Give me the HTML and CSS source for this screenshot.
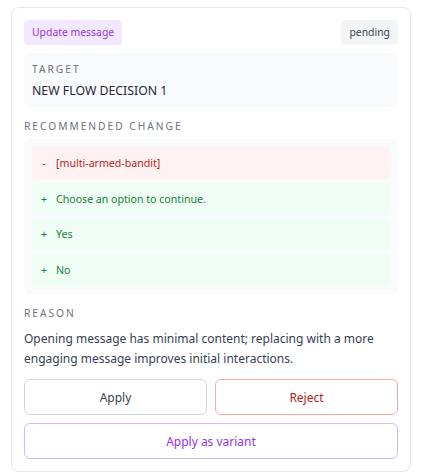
FILE: index.html
```html
<!DOCTYPE html>
<html lang="en">
<head>
    <meta charset="UTF-8">
    <meta name="viewport" content="width=device-width, initial-scale=1.0">
    <title>Suggestion</title>
    <link rel="stylesheet" href="styles.css">
</head>
<body>

    <div class="card">
        <div class="card-head">
            <span class="badge badge-type">Update message</span>
            <span class="badge badge-status">pending</span>
        </div>

        <div class="target">
            <div class="label">Target</div>
            <div class="target-name">NEW FLOW DECISION 1</div>
        </div>

        <div class="label">Recommended change</div>
        <div class="diff">
            <div class="diff-row removed"><span class="sign">-</span><span>[multi-armed-bandit]</span></div>
            <div class="diff-row added"><span class="sign">+</span><span>Choose an option to continue.</span></div>
            <div class="diff-row added"><span class="sign">+</span><span>Yes</span></div>
            <div class="diff-row added"><span class="sign">+</span><span>No</span></div>
        </div>

        <div class="label label-reason">Reason</div>
        <p class="reason">Opening message has minimal content; replacing with a more engaging message improves initial interactions.</p>

        <div class="actions">
            <button class="btn btn-apply">Apply</button>
            <button class="btn btn-reject">Reject</button>
            <button class="btn btn-variant">Apply as variant</button>
        </div>
    </div>

</body>
</html>
```

FILE: styles.css
```css
body {
    font-family: "Noto Sans", "Open Sans", sans-serif;
    margin: 0;
    padding: 7px 11px 0 11px;
    background: #fff;
    color: #1f2937;
}
.card {
    border: 1px solid #e5e7eb;
    border-radius: 8px;
    padding: 12px;
    display: flex;
    flex-direction: column;
}
.card-head {
    display: flex;
    justify-content: space-between;
    align-items: center;
    height: 25px;
}
.badge {
    font-size: 10.4px;
    height: 25px;
    line-height: 25px;
    padding: 0 8px;
    border-radius: 4px;
}
.badge-type {
    background: #f3e8ff;
    color: #9333ea;
}
.badge-status {
    background: #f3f4f6;
    color: #374151;
}
.target {
    margin-top: 8px;
    background: #f9fafb;
    border-radius: 6px;
    padding: 8px 8px 4px 8px;
    height: 54px;
    box-sizing: border-box;
}
.label {
    font-size: 10.2px;
    letter-spacing: 2px;
    text-transform: uppercase;
    color: #6b7280;
    line-height: 16px;
}
.target-name {
    margin-top: 3px;
    font-size: 12.3px;
    line-height: 22px;
    color: #1f2937;
}
.card > .label {
    margin-top: 11px;
    margin-bottom: 5px;
}
.card > .label-reason {
    margin-bottom: 8px;
}
.diff {
    background: #f9fafb;
    border-radius: 6px;
    padding: 8px;
    display: flex;
    flex-direction: column;
    gap: 4px;
    height: 155px;
    box-sizing: border-box;
}
.diff-row {
    height: 32px;
    display: flex;
    align-items: center;
    gap: 8px;
    padding: 0 8px;
    font-size: 10.6px;
    border-radius: 3px;
}
.diff-row .sign {
    width: 8px;
    text-align: center;
}
.removed {
    background: #fef2f2;
    color: #b91c1c;
}
.added {
    background: #f0fdf4;
    color: #15803d;
}
.reason {
    margin: 0;
    font-size: 12px;
    line-height: 20px;
    color: #374151;
}
.actions {
    margin-top: 10px;
    display: grid;
    grid-template-columns: 1fr 1fr;
    gap: 8px;
}
.btn {
    font-family: inherit;
    font-size: 12px;
    height: 36px;
    background: #fff;
    border-radius: 6px;
    cursor: pointer;
}
.btn-apply {
    border: 1px solid #d1d5db;
    color: #374151;
}
.btn-reject {
    border: 1px solid #fca5a5;
    color: #b91c1c;
}
.btn-variant {
    grid-column: span 2;
    border: 1px solid #d8b4fe;
    color: #9333ea;
}
```
